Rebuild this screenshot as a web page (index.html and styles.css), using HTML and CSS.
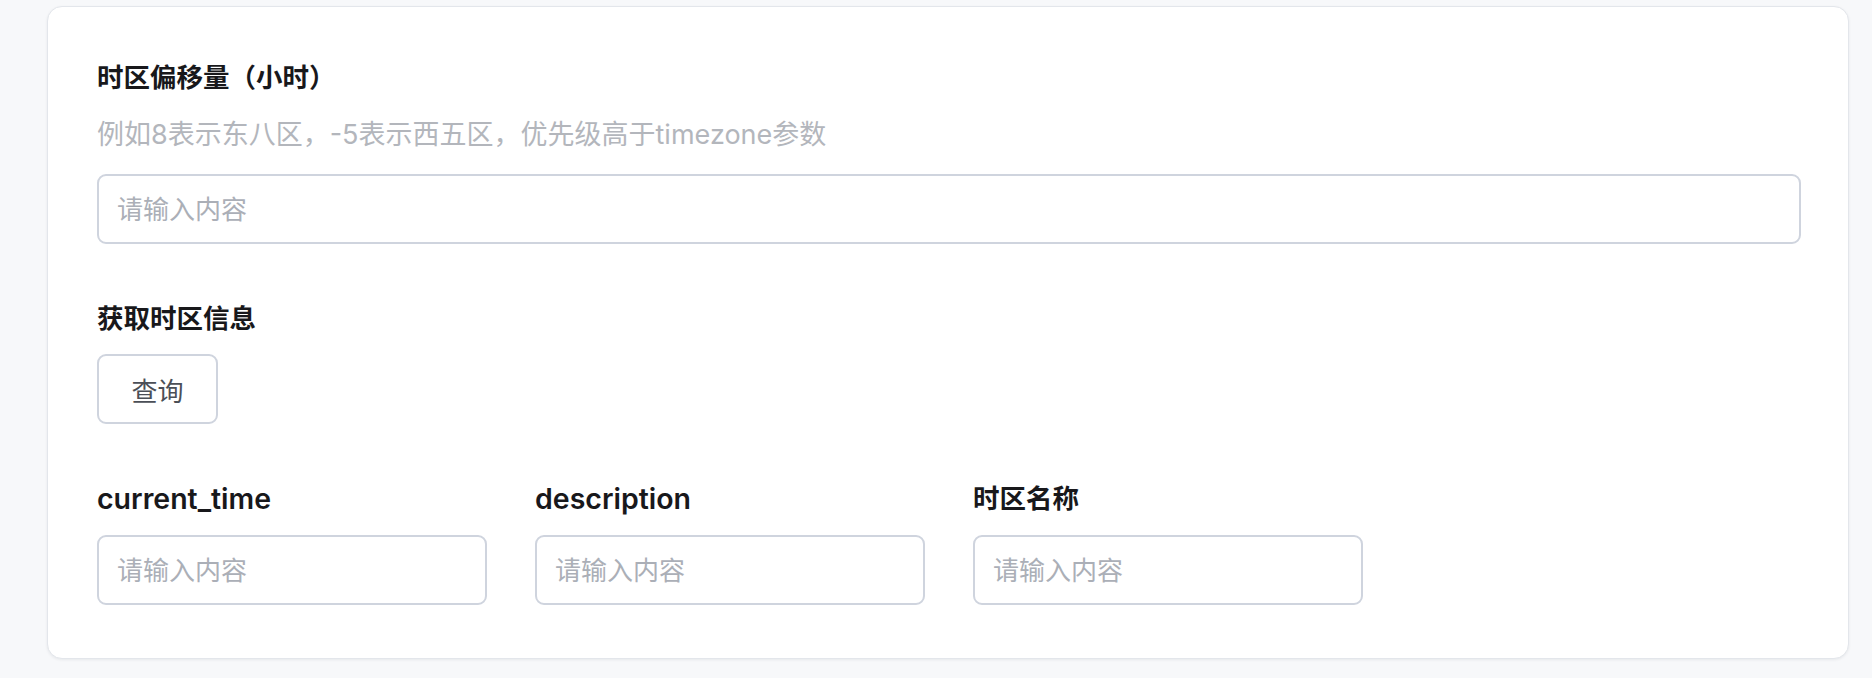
FILE: index.html
```html
<!DOCTYPE html>
<html lang="zh-CN">
<head>
<meta charset="utf-8">
<title>时区信息</title>
<link rel="stylesheet" href="styles.css">
</head>
<body>
<div class="page">
  <section class="card">
    <div class="field">
      <label class="label">时区偏移量（小时）</label>
      <p class="hint">例如8表示东八区，-5表示西五区，优先级高于timezone参数</p>
      <input class="input" type="text" placeholder="请输入内容">
    </div>
    <div class="field">
      <label class="label">获取时区信息</label>
      <button class="btn" type="button">查询</button>
    </div>
    <div class="row">
      <div class="field col">
        <label class="label latin">current_time</label>
        <input class="input" type="text" placeholder="请输入内容">
      </div>
      <div class="field col">
        <label class="label latin">description</label>
        <input class="input" type="text" placeholder="请输入内容">
      </div>
      <div class="field col">
        <label class="label">时区名称</label>
        <input class="input" type="text" placeholder="请输入内容">
      </div>
    </div>
  </section>
</div>
</body>
</html>
```

FILE: styles.css
```css
* { box-sizing: border-box; }
html, body { margin: 0; padding: 0; }
body {
  background: #f7f8fa;
  font-family: "Inter", "Noto Sans CJK SC", sans-serif;
  color: #18181b;
}
.page {
  padding: 6px 23px 22px 47px;
}
.card {
  background: #ffffff;
  border: 1px solid #e3e6eb;
  border-radius: 15px;
  box-shadow: 0 1px 3px rgba(16, 24, 40, 0.07);
  padding: 48px 47px 53px 49px;
  display: flex;
  flex-direction: column;
  gap: 52px;
}
.field {
  display: flex;
  flex-direction: column;
  align-items: flex-start;
}
.label {
  display: block;
  font-size: 26.5px;
  line-height: 45px;
  font-weight: 600;
  color: #18181b;
  margin-bottom: 13px;
}
.label.latin { font-size: 28.5px; }
.hint {
  margin: -1px 0 17px;
  font-size: 27px;
  line-height: 45px;
  color: #b3b6bc;
}
.input {
  width: 100%;
  height: 70px;
  border: 2px solid #cfd4de;
  border-radius: 9px;
  padding: 0 18px;
  font-family: "Inter", "Noto Sans CJK SC", sans-serif;
  font-size: 26px;
  color: #18181b;
  background: #fff;
  outline: none;
}
.input::placeholder { color: #abafb7; }
.btn {
  height: 70px;
  width: 121px;
  border: 2px solid #cfd4de;
  border-radius: 9px;
  background: #fff;
  font-family: "Inter", "Noto Sans CJK SC", sans-serif;
  font-size: 26px;
  color: #4b4f57;
  padding: 0;
}
.row {
  display: flex;
  gap: 48px;
}
.col { width: 390px; }
.col .label { margin-bottom: 14px; }
```
